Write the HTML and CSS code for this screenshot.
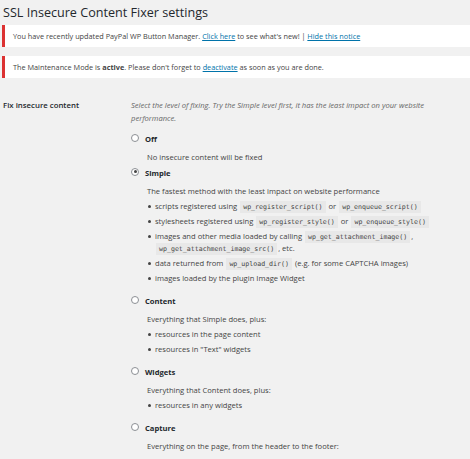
FILE: index.html
```html
<!DOCTYPE html>
<html lang="en">
<head>
    <meta charset="UTF-8">
    <title>SSL Insecure Content Fixer settings</title>
    <link rel="stylesheet" href="styles.css">
</head>
<body>
    <div class="wrap">
        <h1>SSL Insecure Content Fixer settings</h1>

        <div class="notice">
            <p>You have recently updated PayPal WP Button Manager. <a href="#">Click here</a> to see what's new! | <a href="#">Hide this notice</a></p>
        </div>
        <div class="notice">
            <p>The Maintenance Mode is <strong>active</strong>. Please don't forget to <a href="#">deactivate</a> as soon as you are done.</p>
        </div>

        <div class="form-row">
            <div class="form-label">Fix insecure content</div>
            <div class="form-field">
                <p class="field-help">Select the level of fixing. Try the Simple level first, it has the least impact on your website performance.</p>

                <div class="option">
                    <label class="option-label"><span class="radio"></span>Off</label>
                    <p class="option-desc">No insecure content will be fixed</p>
                </div>

                <div class="option">
                    <label class="option-label"><span class="radio checked"></span>Simple</label>
                    <p class="option-desc">The fastest method with the least impact on website performance</p>
                    <ul>
                        <li>scripts registered using <code>wp_register_script()</code> or <code>wp_enqueue_script()</code></li>
                        <li>stylesheets registered using <code>wp_register_style()</code> or <code>wp_enqueue_style()</code></li>
                        <li>images and other media loaded by calling <code>wp_get_attachment_image()</code>, <code>wp_get_attachment_image_src()</code>, etc.</li>
                        <li>data returned from <code>wp_upload_dir()</code> (e.g. for some CAPTCHA images)</li>
                        <li>images loaded by the plugin Image Widget</li>
                    </ul>
                </div>

                <div class="option">
                    <label class="option-label"><span class="radio"></span>Content</label>
                    <p class="option-desc">Everything that Simple does, plus:</p>
                    <ul>
                        <li>resources in the page content</li>
                        <li>resources in "Text" widgets</li>
                    </ul>
                </div>

                <div class="option">
                    <label class="option-label"><span class="radio"></span>Widgets</label>
                    <p class="option-desc">Everything that Content does, plus:</p>
                    <ul>
                        <li>resources in any widgets</li>
                    </ul>
                </div>

                <div class="option">
                    <label class="option-label"><span class="radio"></span>Capture</label>
                    <p class="option-desc">Everything on the page, from the header to the footer:</p>
                    <ul>
                        <li>capture the whole page and fix scripts, stylesheets, and other resources</li>
                        <li>excludes AJAX calls, which can cause some compatibility and performance problems</li>
                    </ul>
                </div>
            </div>
        </div>
    </div>
</body>
</html>
```
FILE: styles.css
```css
body {
    margin: 0;
    background-color: #f1f1f1;
    color: #444;
    font-family: "Open Sans", Arial, sans-serif;
    font-size: 7.6px;
    overflow: hidden;
}
.wrap {
    padding: 0 0 0 2px;
}
h1 {
    margin: 0;
    padding: 4px 0 0 1px;
    font-size: 12.6px;
    font-weight: 400;
    line-height: 17px;
    color: #23282d;
}
a {
    color: #0073aa;
}
.notice {
    margin: 4px 0 9px;
    padding: 0 8px;
    background-color: white;
    border-left: 3px solid #dc3232;
}
.notice p {
    margin: 0;
    font-size: 7.3px;
    line-height: 22px;
}
.form-row {
    display: grid;
    grid-template-columns: 129px 1fr;
    padding-top: 5px;
}
.form-label {
    padding: 7px 0 0 1px;
    font-size: 7.8px;
    font-weight: 600;
    color: #23282d;
    line-height: 13px;
}
.form-field {
    padding-top: 7px;
    padding-right: 14px;
}
.field-help {
    margin: 0 0 7px;
    font-style: italic;
    color: #666;
    line-height: 13px;
}
.option {
    margin-bottom: 2px;
}
.option-label {
    display: flex;
    align-items: center;
    gap: 6px;
    font-weight: 700;
    color: #23282d;
    line-height: 14px;
}
.radio {
    width: 6px;
    height: 6px;
    margin-bottom: 3px;
    border: 1px solid #8c8f94;
    border-radius: 50%;
    background-color: white;
    position: relative;
}
.radio.checked::after {
    content: "";
    position: absolute;
    left: 1.5px;
    top: 1.5px;
    width: 3px;
    height: 3px;
    border-radius: 50%;
    background-color: #444;
}
.option-desc {
    margin: 4px 0 0 16px;
    line-height: 14px;
}
.option ul {
    margin: 2px 0 0 16px;
    padding: 0 0 5px;
    list-style: none;
}
.option li {
    position: relative;
    padding-left: 8px;
    margin-bottom: 3px;
    line-height: 12px;
}
.option li::before {
    content: "";
    position: absolute;
    left: 1px;
    top: 5px;
    width: 3px;
    height: 3px;
    border-radius: 50%;
    background-color: #444;
}
code {
    font-family: "DejaVu Sans Mono", monospace;
    font-size: 6.6px;
    line-height: 1;
    background-color: #e8e8e8;
    padding: 2px 3px;
    margin: 0 1px;
    color: #444;
}
```
